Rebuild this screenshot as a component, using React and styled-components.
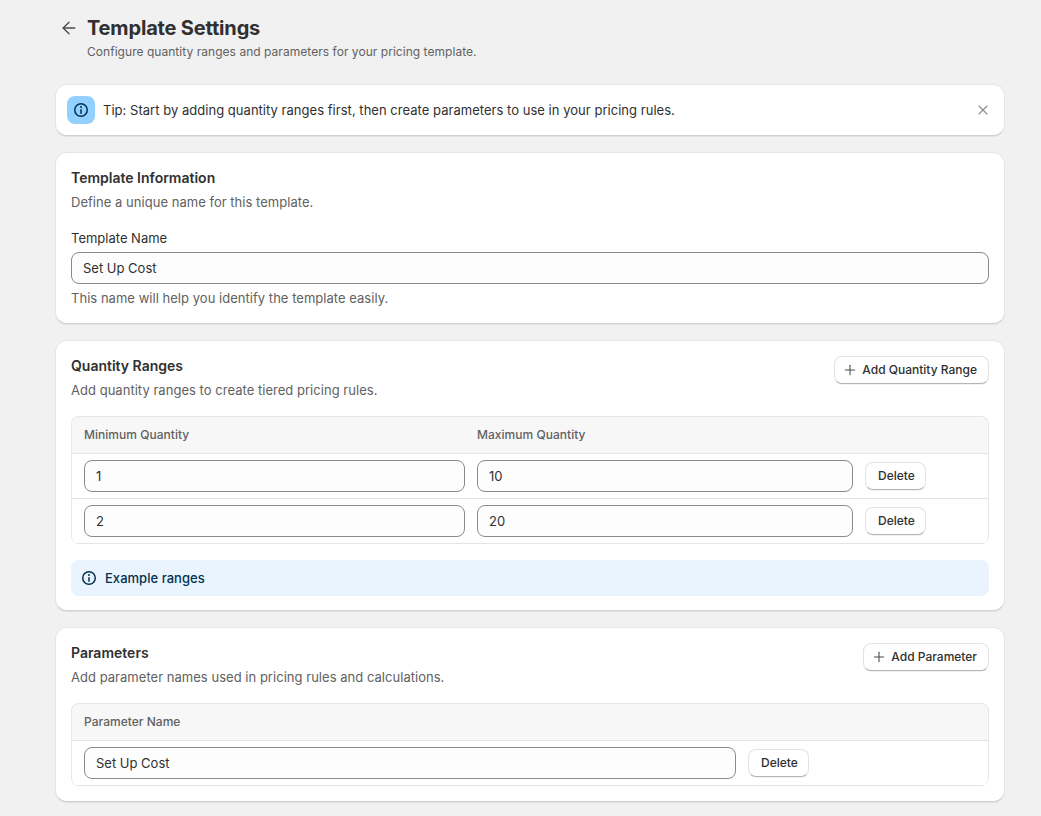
import React from "react";
import styled, { createGlobalStyle } from "styled-components";
import { ArrowLeft, Plus, X } from "lucide-react";

const Global = createGlobalStyle`
    html, body {
        margin: 0;
        background: #f1f1f1;
        font-family: Inter, "Noto Sans", sans-serif;
        font-size: 13px;
        color: #303030;
    }
`

const Page = styled.div`
    width: 950px;
    margin-left: 55px;
    padding: 16px 0 14px;
    display: flex;
    flex-direction: column;
    gap: 16px;
`

const Header = styled.header`
    display: grid;
    grid-template-columns: 27px 1fr;
    align-content: start;
    column-gap: 5px;
    height: 52px;
`

const BackButton = styled.button`
    all: unset;
    height: 24px;
    display: flex;
    align-items: center;
    justify-content: center;
    color: #4a4a4a;
`

const Title = styled.h1`
    margin: 0;
    font-size: 20px;
    line-height: 24px;
    font-weight: 700;
    letter-spacing: -0.17px;
    color: #303030;
`

const Subtitle = styled.p`
    grid-column: 2;
    margin: 2px 0 0;
    font-size: 12px;
    line-height: 20px;
    letter-spacing: 0.04px;
    color: #616161;
`

const Card = styled.section`
    background: #fff;
    border-radius: 12px;
    border: 1px solid #e6e6e6;
    border-bottom-color: #d0d0d0;
    box-shadow: 0 1px 1px rgba(26, 26, 26, 0.07);
    padding: 15px;
    box-sizing: border-box;
`

const RangesCard = styled(Card)`
    padding-bottom: 14px;
`

const Tip = styled(Card)`
    height: 52px;
    padding: 0 13px 0 11px;
    display: flex;
    align-items: center;
    gap: 8px;
`

const TipIcon = styled.span`
    width: 28px;
    height: 28px;
    border-radius: 8px;
    background: #91d0ff;
    color: #00324f;
    display: flex;
    align-items: center;
    justify-content: center;
`

const TipText = styled.span`
    flex: 1;
    font-size: 13px;
    line-height: 20px;
    letter-spacing: 0.03px;
`

const CloseButton = styled.span`
    display: flex;
    color: #8a8a8a;
`

const CardHead = styled.div`
    display: flex;
    justify-content: space-between;
    align-items: flex-start;
    margin-bottom: 16px;
`

const CardTitle = styled.h2`
    margin: 0;
    font-size: 14px;
    line-height: 20px;
    font-weight: 600;
    color: #303030;
`

const Muted = styled.p`
    margin: 4px 0 0;
    font-size: 13px;
    line-height: 20px;
    letter-spacing: 0.03px;
    color: #616161;
`

const Field = styled.div`
    margin-top: 16px;
`

const Label = styled.label`
    display: block;
    font-size: 13px;
    line-height: 20px;
    margin-bottom: 4px;
    color: #303030;
`

const Input = styled.input`
    display: block;
    box-sizing: border-box;
    width: 100%;
    height: 32px;
    padding: 0 11px;
    border: 1px solid #8a8a8a;
    border-radius: 8px;
    background: #fdfdfd;
    font-family: inherit;
    font-size: 13px;
    color: #303030;
    outline: none;
`

const Button = styled.button`
    display: inline-flex;
    align-items: center;
    gap: 4px;
    height: 28px;
    padding: 0 12px 1px;
    box-sizing: border-box;
    background: #fff;
    border: 1px solid #e3e3e3;
    border-bottom-color: #b5b5b5;
    border-radius: 8px;
    box-shadow: 0 1px 0 rgba(0, 0, 0, 0.05);
    font-family: inherit;
    font-size: 12px;
    font-weight: 500;
    color: #303030;
    white-space: nowrap;
`

const AddButton = styled(Button)`
    padding: 0 11px 1px 7px;
    svg { color: #4a4a4a; }
`

const Table = styled.div`
    border: 1px solid #e6e6e6;
    border-bottom: 0;
    border-radius: 8px;
    overflow: hidden;
`

const HeadRow = styled.div`
    display: grid;
    grid-template-columns: ${p => p.$columns};
    column-gap: 12px;
    align-items: center;
    height: 37px;
    padding: 0 12px 2px;
    box-sizing: border-box;
    background: #f7f7f7;
    border-bottom: 1px solid #e3e3e3;
    font-size: 12px;
    font-weight: 550;
    letter-spacing: 0.03px;
    color: #616161;
`

const Row = styled.div`
    display: grid;
    grid-template-columns: ${p => p.$columns};
    column-gap: 12px;
    align-items: center;
    height: 45px;
    padding: 0 12px;
    box-sizing: border-box;
    border-bottom: 1px solid #e3e3e3;
`

const Notice = styled.div`
    display: flex;
    align-items: center;
    gap: 6px;
    height: 36px;
    margin-top: 16px;
    padding: 0 8px 1px;
    box-sizing: border-box;
    border-radius: 8px;
    background: #eaf4ff;
    color: #00324f;
    font-size: 13px;
    font-weight: 550;
    letter-spacing: 0.03px;
    svg { flex: none; }
`

function InfoIcon() {
    return (
        <svg width="20" height="20" viewBox="0 0 20 20" fill="currentColor">
            <path d="M10 14a.75.75 0 0 1-.75-.75v-3.5a.75.75 0 0 1 1.5 0v3.5a.75.75 0 0 1-.75.75Z"/>
            <path d="M9 7a1 1 0 1 1 2 0 1 1 0 0 1-2 0Z"/>
            <path fillRule="evenodd" d="M17 10a7 7 0 1 1-14 0 7 7 0 0 1 14 0Zm-1.5 0a5.5 5.5 0 1 1-11 0 5.5 5.5 0 0 1 11 0Z"/>
        </svg>
    )
}

const rangeColumns = "381px 376px 61px"
const paramColumns = "652px 61px"
const ranges = [["1", "10"], ["2", "20"]]

export default function App() {
    return (
        <>
            <Global/>
            <Page>
                <Header>
                    <BackButton><ArrowLeft size={20} strokeWidth={1.6}/></BackButton>
                    <Title>Template Settings</Title>
                    <Subtitle>Configure quantity ranges and parameters for your pricing template.</Subtitle>
                </Header>

                <Tip>
                    <TipIcon><InfoIcon/></TipIcon>
                    <TipText>Tip: Start by adding quantity ranges first, then create parameters to use in your pricing rules.</TipText>
                    <CloseButton><X size={16} strokeWidth={1.6}/></CloseButton>
                </Tip>

                <Card>
                    <CardTitle>Template Information</CardTitle>
                    <Muted>Define a unique name for this template.</Muted>
                    <Field>
                        <Label>Template Name</Label>
                        <Input defaultValue="Set Up Cost"/>
                        <Muted>This name will help you identify the template easily.</Muted>
                    </Field>
                </Card>

                <RangesCard>
                    <CardHead>
                        <div>
                            <CardTitle>Quantity Ranges</CardTitle>
                            <Muted>Add quantity ranges to create tiered pricing rules.</Muted>
                        </div>
                        <AddButton><Plus size={16} strokeWidth={1.6}/>Add Quantity Range</AddButton>
                    </CardHead>
                    <Table>
                        <HeadRow $columns={rangeColumns}>
                            <span>Minimum Quantity</span>
                            <span>Maximum Quantity</span>
                        </HeadRow>
                        {ranges.map(([min, max]) => (
                            <Row key={min} $columns={rangeColumns}>
                                <Input defaultValue={min}/>
                                <Input defaultValue={max}/>
                                <Button>Delete</Button>
                            </Row>
                        ))}
                    </Table>
                    <Notice><InfoIcon/>Example ranges</Notice>
                </RangesCard>

                <Card>
                    <CardHead>
                        <div>
                            <CardTitle>Parameters</CardTitle>
                            <Muted>Add parameter names used in pricing rules and calculations.</Muted>
                        </div>
                        <AddButton><Plus size={16} strokeWidth={1.6}/>Add Parameter</AddButton>
                    </CardHead>
                    <Table>
                        <HeadRow $columns={paramColumns}>
                            <span>Parameter Name</span>
                        </HeadRow>
                        <Row $columns={paramColumns}>
                            <Input defaultValue="Set Up Cost"/>
                            <Button>Delete</Button>
                        </Row>
                    </Table>
                </Card>
            </Page>
        </>
    )
}
